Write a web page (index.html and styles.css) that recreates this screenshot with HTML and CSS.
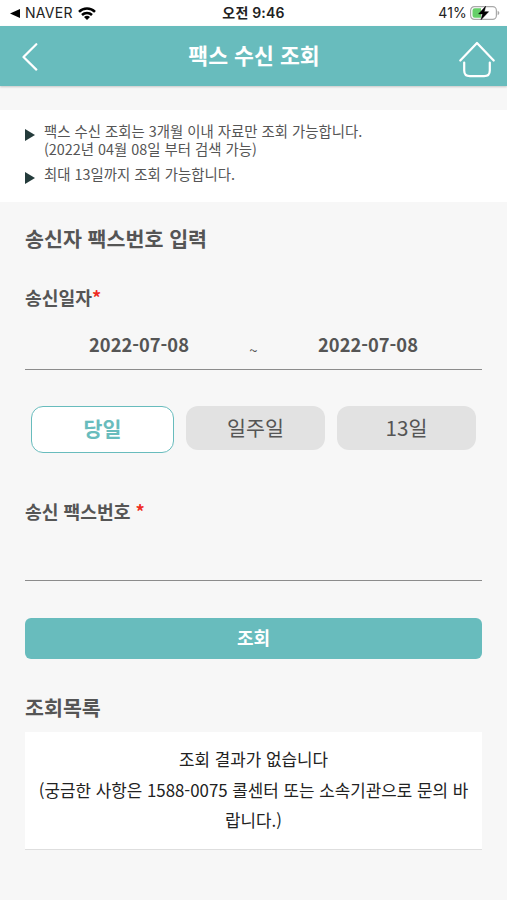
FILE: index.html
```
<!DOCTYPE html>
<html lang="ko">
<head>
<meta charset="utf-8">
<meta name="viewport" content="width=device-width, initial-scale=1">
<title>팩스 수신 조회</title>
<link rel="stylesheet" href="styles.css">
</head>
<body>
<div class="status">
  <div class="status-left">
    <svg class="back-app" viewBox="0 0 10 9"><path d="M0 4.5 10 0v9z"/></svg>
    <span class="carrier">NAVER</span>
    <svg class="wifi" viewBox="0 0 18 13"><g fill="none" stroke="#000" stroke-width="2.5"><path d="M1 4.8a11.4 11.4 0 0 1 16 0"/><path d="M4 8a7.1 7.1 0 0 1 10 0"/></g><path d="M9 13 6 10.1a4.3 4.3 0 0 1 6 0z"/></svg>
  </div>
  <div class="clock">오전 9:46</div>
  <div class="status-right">
    <span class="percent">41%</span>
    <svg class="battery" viewBox="0 0 30 14"><rect x=".6" y=".6" width="25.8" height="12.8" rx="3.8" fill="#fff" stroke="#a9a9a9" stroke-width="1.2"/><path d="M4.7 2.2H11v9.6H4.7a2.2 2.2 0 0 1-2.2-2.2V4.4a2.2 2.2 0 0 1 2.2-2.2z" fill="#66cf69"/><path d="M27.6 4.8c2.3.8 2.3 3.6 0 4.4z" fill="#a9a9a9"/><path d="M15.6.3 8.6 7.9h3.900l-1.500 5.800 7.600-8h-4.300z" stroke="#000" stroke-width=".5"/></svg>
  </div>
</div>
<header class="header">
  <svg class="chevron" viewBox="0 0 16 28"><path d="M14.3 1.2 1.5 14l12.8 12.6"/></svg>
  <h1>팩스 수신 조회</h1>
  <svg class="home" viewBox="0 0 36 37"><path d="M1.3 19.5 18 2l16.7 17.5M5.2 21.5v8q0 5.700 5.700 5.700h14.200q5.700 0 5.700-5.700v-8"/></svg>
</header>
<ul class="notes">
  <li>팩스 수신 조회는 3개월 이내 자료만 조회 가능합니다.<br>(2022년 04월 08일 부터 검색 가능)</li>
  <li>최대 13일까지 조회 가능합니다.</li>
</ul>
<main class="content">
  <h2>송신자 팩스번호 입력</h2>
  <div class="label date-label">송신일자<span class="required">*</span></div>
  <div class="dates"><span class="date">2022-07-08</span><span class="tilde">~</span><span class="date">2022-07-08</span></div>
  <div class="periods">
    <div class="period active">당일</div>
    <div class="period">일주일</div>
    <div class="period">13일</div>
  </div>
  <div class="label fax-label">송신 팩스번호 <span class="required">*</span></div>
  <div class="fax-input"></div>
  <div class="search">조회</div>
  <h2 class="list-title">조회목록</h2>
  <div class="result">조회 결과가 없습니다<br>(궁금한 사항은 1588-0075 콜센터 또는 소속기관으로 문의 바<br>랍니다.)</div>
</main>
</body>
</html>
```
FILE: styles.css
```
* { box-sizing: border-box; }
body {
  margin: 0;
  min-height: 900px;
  background: #f7f7f7;
  color: #555;
  font-family: "Noto Sans CJK KR", sans-serif;
}
svg { display: block; flex: none; }
h1, h2 { margin: 0; font-weight: 700; }
.status {
  height: 26px;
  display: grid;
  grid-template-columns: 1fr auto 1fr;
  align-items: center;
  background: #fff;
  color: #222;
  font-family: Inter, "Noto Sans CJK KR", sans-serif;
  font-size: 14px;
  line-height: 20px;
}
.status-left { display: flex; align-items: center; padding-left: 10px; }
.back-app { width: 10px; height: 9px; margin-right: 5px; }
.carrier { width: 48px; white-space: nowrap; letter-spacing: .3px; }
.wifi { width: 18px; height: 13px; margin-left: 5px; }
.clock { font-weight: 600; letter-spacing: .2px; }
.status-right { display: flex; align-items: center; justify-content: flex-end; padding-right: 7px; }
.percent { margin-right: 3px; letter-spacing: .2px; }
.battery { width: 30px; height: 14px; }
.header {
  height: 60px;
  display: flex;
  align-items: center;
  justify-content: space-between;
  padding: 0 12px 0 22px;
  background: #68bcbd;
  box-shadow: 0 1px 2px rgba(0, 0, 0, .2);
  color: #fff;
}
.header path { fill: none; stroke: #fff; stroke-width: 2.2; stroke-linecap: round; stroke-linejoin: round; }
.chevron { width: 16px; height: 28px; margin: 2px 11px 0 0; }
.home { width: 36px; height: 37px; margin-top: 7px; }
h1 { font-size: 21.6px; line-height: 32px; margin-top: -2px; }
.notes {
  height: 92px;
  margin: 24px 0 0;
  padding: 12px 0 0 25px;
  background: #fff;
  list-style: none;
  font-size: 14.4px;
  line-height: 18px;
}
.notes li { position: relative; padding-left: 19px; margin-bottom: 7px; }
.notes li::before {
  content: "";
  position: absolute;
  left: 0;
  top: 7px;
  border-left: 10px solid #243b3b;
  border-top: 6px solid transparent;
  border-bottom: 6px solid transparent;
}
.content { padding: 20px 25px 0; }
h2 { font-size: 20.6px; line-height: 32px; }
.label { font-size: 18.2px; line-height: 28px; font-weight: 700; }
.required { color: #ef2b22; }
.date-label { margin-top: 29px; }
.dates {
  height: 59px;
  display: grid;
  grid-template-columns: 1fr 9px 1fr;
  padding: 19px 4px 0;
  border-bottom: 1px solid #8c8c8c;
  text-align: center;
  font-size: 18.3px;
  line-height: 28px;
}
.date { font-weight: 700; }
.tilde { font-size: 15px; padding-top: 6px; }
.periods { display: flex; gap: 12px; padding: 36px 6px 0; align-items: flex-start; }
.period {
  flex: 1;
  height: 44px;
  border-radius: 12px;
  background: #e2e2e2;
  text-align: center;
  font-size: 20.6px;
  line-height: 43px;
}
.active {
  flex: none;
  width: 143px;
  height: 47px;
  border: 1.5px solid #68bcbd;
  background: #fff;
  color: #68bcbd;
  font-weight: 700;
}
.fax-label { margin-top: 44px; }
.fax-input { height: 56px; border-bottom: 1px solid #8c8c8c; }
.search {
  height: 41px;
  margin-top: 37px;
  border-radius: 6px;
  background: #68bcbd;
  color: #fff;
  text-align: center;
  font-size: 18px;
  font-weight: 700;
  line-height: 39px;
}
.list-title { margin-top: 32px; }
.result {
  height: 118px;
  margin-top: 9px;
  padding-top: 12px;
  border-bottom: 1px solid #dedede;
  background: #fff;
  color: #222;
  text-align: center;
  white-space: nowrap;
  font-size: 16.85px;
  line-height: 30.5px;
}
```
